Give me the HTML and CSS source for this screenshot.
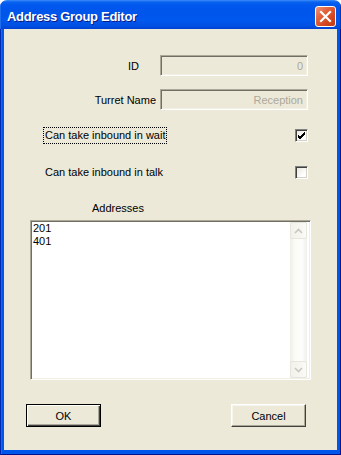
FILE: index.html
```html
<!DOCTYPE html>
<html>
<head>
<meta charset="utf-8">
<title>Address Group Editor</title>
<link rel="stylesheet" href="styles.css">
</head>
<body>
<div class="window">
  <div class="titlebar">
    <span class="title">Address Group Editor</span>
    <span class="close">
      <svg width="13" height="13" viewBox="0 0 13 13"><path d="M2 2 L11 11 M11 2 L2 11" stroke="#fff" stroke-width="2.2" stroke-linecap="square" fill="none"/></svg>
    </span>
  </div>
  <div class="frame">
    <div class="client">
      <div class="field-row">
        <span class="label label-id">ID</span>
        <div class="edit">0</div>
      </div>
      <div class="field-row row-turret">
        <span class="label label-turret">Turret Name</span>
        <div class="edit">Reception</div>
      </div>
      <div class="check-row row-wait">
        <span class="check-label focus">Can take inbound in wait</span>
        <span class="checkbox">
          <svg width="9" height="9" viewBox="0 0 9 9"><path d="M1 4 L3 6 L8 1 M1 5 L3 7 L8 2 M1 6 L3 8 L8 3" stroke="#000" stroke-width="1" fill="none"/></svg>
        </span>
      </div>
      <div class="check-row row-talk">
        <span class="check-label">Can take inbound in talk</span>
        <span class="checkbox"></span>
      </div>
      <div class="group-label">Addresses</div>
      <div class="listbox">
        <div class="items">
          <div class="item">201</div>
          <div class="item">401</div>
        </div>
        <div class="scrollbar">
          <div class="sb-btn">
            <svg width="9" height="6" viewBox="0 0 9 6"><path d="M1 5 L4.5 1.5 L8 5" stroke="#c9c8c0" stroke-width="1.6" fill="none"/></svg>
          </div>
          <div class="sb-track"></div>
          <div class="sb-btn">
            <svg width="9" height="6" viewBox="0 0 9 6"><path d="M1 1 L4.5 4.5 L8 1" stroke="#c9c8c0" stroke-width="1.6" fill="none"/></svg>
          </div>
        </div>
      </div>
      <div class="buttons">
        <button class="btn btn-default">OK</button>
        <button class="btn">Cancel</button>
      </div>
    </div>
  </div>
</div>
</body>
</html>
```
FILE: styles.css
```css
html, body {
  margin: 0;
  padding: 0;
  background: #ffffff;
}

body {
  font-family: "Liberation Sans", Arial, sans-serif;
  font-size: 11px;
  color: #000;
}

.window {
  width: 341px;
  height: 455px;
  display: flex;
  flex-direction: column;
  border-radius: 7px 7px 0 0;
  overflow: hidden;
}

.titlebar {
  height: 29px;
  flex: none;
  display: flex;
  align-items: flex-start;
  justify-content: space-between;
  padding-left: 7px;
  padding-right: 5px;
  box-sizing: border-box;
  background: linear-gradient(#3d8dfb 0px, #0a62ee 2px, #0058ee 5px, #0055eb 12px, #0058ee 20px, #0050e2 26px, #0041d2 29px);
  box-shadow: inset 1px 0 #1e6ff0, inset -1px 0 #0038b8;
}

.title {
  margin-top: 9px;
  font-family: "Liberation Sans", Arial, sans-serif;
  font-weight: bold;
  font-size: 13px;
  line-height: 15px;
  letter-spacing: -0.3px;
  color: #fff;
  text-shadow: 1px 1px #0a1a8a;
}

.close {
  margin-top: 6px;
  width: 21px;
  height: 21px;
  box-sizing: border-box;
  border: 1px solid #fff;
  border-radius: 3px;
  background: linear-gradient(135deg, #f0957a 0%, #e2633f 35%, #d2461f 70%, #c23a17 100%);
  display: flex;
  align-items: center;
  justify-content: center;
}

.frame {
  flex: 1;
  display: flex;
  padding: 0 4px 5px 4px;
  background: #0055ea;
  box-shadow: inset 1px 0 #0029b0, inset -1px 0 #00138c, inset 0 -1px #00138c, inset 2px 0 #166aee;
}

.client {
  flex: 1;
  background: #ece9d8;
  display: flex;
  flex-direction: column;
  padding-top: 26px;
}

.field-row {
  display: flex;
  justify-content: flex-end;
  align-items: center;
  padding-right: 29px;
  height: 21px;
}

.row-turret {
  margin-top: 13px;
}

.label {
  line-height: 13px;
  padding-top: 1px;
}

.label-id {
  margin-right: 21px;
}

.label-turret {
  margin-right: 4px;
}

.edit {
  width: 148px;
  height: 21px;
  box-sizing: border-box;
  border: 1px solid;
  border-color: #aca899 #ffffff #ffffff #aca899;
  box-shadow: inset 1px 1px #716f64, inset -1px -1px #f1efe2;
  background: #ece9d8;
  color: #aca899;
  text-align: right;
  padding: 3px 4px 0 0;
  line-height: 14px;
}

.check-row {
  display: flex;
  align-items: center;
  justify-content: space-between;
  padding-left: 39px;
  padding-right: 29px;
  height: 17px;
}

.row-wait {
  margin-top: 17px;
}

.row-talk {
  margin-top: 20px;
}

.check-label {
  border: 1px dotted transparent;
  padding: 1px;
  line-height: 13px;
}

.check-label.focus {
  border-color: #000;
}

.checkbox {
  width: 13px;
  height: 13px;
  box-sizing: border-box;
  border: 1px solid;
  border-color: #808080 #ffffff #ffffff #808080;
  box-shadow: inset 1px 1px #404040, inset -1px -1px #d4d0c8;
  background: linear-gradient(135deg, #e6e4da, #ffffff 70%);
  display: flex;
  align-items: center;
  justify-content: center;
}

.group-label {
  margin-top: 20px;
  padding-left: 88px;
  line-height: 14px;
  height: 14px;
}

.listbox {
  margin-top: 5px;
  margin-left: 26px;
  width: 281px;
  height: 160px;
  box-sizing: border-box;
  border: 1px solid;
  border-color: #aca899 #ffffff #ffffff #aca899;
  box-shadow: inset 1px 1px #716f64, inset -1px -1px #f1efe2;
  padding: 1px 3px 1px 1px;
  background: #fff;
  display: flex;
}

.items {
  flex: 1;
  padding: 0 0 0 1px;
  line-height: 13px;
}

.item {
  height: 13px;
}

.scrollbar {
  width: 17px;
  display: flex;
  flex-direction: column;
  background: linear-gradient(to right, #efeee6, #fbfbf8 30%, #fdfdfb 70%, #f1f0ea);
}

.sb-btn {
  height: 17px;
  box-sizing: border-box;
  border: 1px solid #e7e6dd;
  border-radius: 2px;
  background: linear-gradient(to right, #f2f1ea, #fafaf7);
  display: flex;
  align-items: center;
  justify-content: center;
}

.sb-track {
  flex: 1;
}

.buttons {
  margin-top: 24px;
  display: flex;
  justify-content: space-between;
  padding-left: 22px;
  padding-right: 31px;
}

.btn {
  width: 75px;
  height: 23px;
  box-sizing: border-box;
  margin: 0;
  padding: 0;
  font-family: "Liberation Sans", Arial, sans-serif;
  font-size: 11px;
  color: #000;
  background: #ece9d8;
  border: 1px solid;
  border-color: #ffffff #404040 #404040 #ffffff;
  box-shadow: inset -1px -1px #aca899, inset 1px 1px #f6f5ef;
}

.btn-default {
  border: 1px solid #000;
  box-shadow: inset 1px 1px #ffffff, inset -1px -1px #404040, inset -2px -2px #aca899;
}
```
